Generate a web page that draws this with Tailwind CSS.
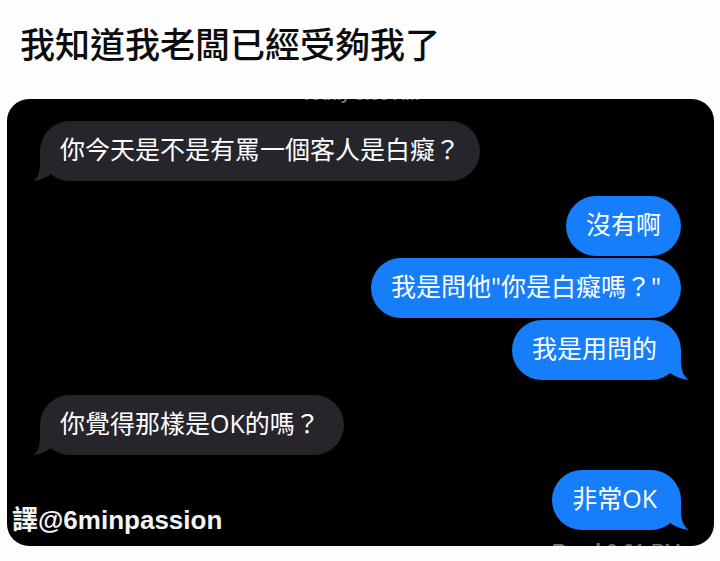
<!DOCTYPE html>
<html lang="zh-Hant">
<head>
<meta charset="utf-8">
<meta name="viewport" content="width=device-width, initial-scale=1">
<title>我知道我老闆已經受夠我了</title>
<script src="https://cdn.jsdelivr.net/npm/@tailwindcss/browser@4"></script>
</head>
<body class="min-h-screen bg-[#fefefe] font-['Open_Sans','Noto_Sans_CJK_TC',sans-serif]">
<main class="flex min-h-screen flex-col pr-[6px] pb-[15px] pl-[7px]">
  <h1 class="pt-5 pb-[29px] pl-[13px] text-[35px] leading-[50px] font-medium text-[#0c0c0c]">我知道我老闆已經受夠我了</h1>
  <section class="relative flex grow flex-col overflow-hidden rounded-[22px] bg-black px-[33px] pb-4" aria-label="對話">
    <p class="-mt-[14px] mb-4 text-center font-['Liberation_Sans',sans-serif] text-[17px] leading-5 font-bold text-[#77777c]">Today 8:00 AM</p>
    <ol class="flex flex-col gap-[15px] text-[25px] leading-[56px] text-white">
      <li class="relative self-start rounded-[30px] bg-[#26252c] px-5 pb-1">
        <svg class="absolute bottom-0 -left-[7px] h-[30px] w-[30px]" viewBox="0 0 30 30" fill="#26252c" aria-hidden="true"><path d="M7 0V10C7 20 6 26 0 30Q10 29 18 23L30 15V0Z"/></svg>
        <span class="relative">你今天是不是有罵一個客人是白癡？</span>
      </li>
      <li class="flex flex-col items-end gap-[2px]">
        <p class="rounded-[30px] bg-[#167efb] px-5 pb-1">沒有啊</p>
        <p class="rounded-[30px] bg-[#167efb] px-5 pb-1">我是問他"你是白癡嗎？"</p>
        <p class="relative rounded-[30px] bg-[#167efb] pr-6 pb-1 pl-5">
          <svg class="absolute -right-[8px] bottom-0 h-[30px] w-[30px]" viewBox="0 0 30 30" fill="#167efb" aria-hidden="true"><path d="M22 0V10C22 20 24 26 30 30Q20 29 11 23L0 15V0Z"/></svg>
          <span class="relative">我是用問的</span>
        </p>
      </li>
      <li class="relative self-start rounded-[30px] bg-[#26252c] pr-6 pb-1 pl-5">
        <svg class="absolute bottom-0 -left-[7px] h-[30px] w-[30px]" viewBox="0 0 30 30" fill="#26252c" aria-hidden="true"><path d="M7 0V10C7 20 6 26 0 30Q10 29 18 23L30 15V0Z"/></svg>
        <span class="relative">你覺得那樣是OK的嗎？</span>
      </li>
      <li class="relative self-end rounded-[30px] bg-[#167efb] pr-6 pb-1 pl-5">
        <svg class="absolute -right-[8px] bottom-0 h-[30px] w-[30px]" viewBox="0 0 30 30" fill="#167efb" aria-hidden="true"><path d="M22 0V10C22 20 24 26 30 30Q20 29 11 23L0 15V0Z"/></svg>
        <span class="relative">非常OK</span>
      </li>
    </ol>
    <p class="absolute right-[33px] -bottom-[17px] font-['Liberation_Sans',sans-serif] text-[20px] leading-6 text-[#77777c]"><b>Read</b> 9:01 PM</p>
    <p class="absolute bottom-[10px] left-[5px] font-['Liberation_Sans','Noto_Sans_CJK_TC',sans-serif] text-[26px] leading-8 font-bold text-[#f4f4f4]">譯@6minpassion</p>
  </section>
</main>
</body>
</html>
